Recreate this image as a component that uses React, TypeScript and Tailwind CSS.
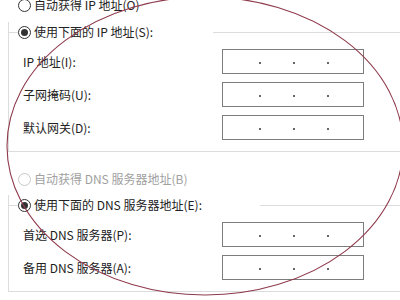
import React from "react";

function Radio({ checked = false, disabled = false }: { checked?: boolean; disabled?: boolean }) {
  return (
    <span
      className={`flex h-[13px] w-[13px] shrink-0 items-center justify-center rounded-full border bg-white ${
        disabled ? "border-[#c8c8c8]" : "border-[#333]"
      }`}
    >
      {checked && <span className="h-[7px] w-[7px] rounded-full bg-[#333]" />}
    </span>
  );
}

function IpBox() {
  return (
    <div className="flex h-[25px] w-[142px] shrink-0 items-center gap-[32px] border border-[#7d7d7d] bg-white pl-[36px] pt-[3px]">
      <span className="h-[2px] w-[2px] rounded-full bg-[#333]" />
      <span className="h-[2px] w-[2px] rounded-full bg-[#333]" />
      <span className="h-[2px] w-[2px] rounded-full bg-[#333]" />
    </div>
  );
}

function Field({ label }: { label: string }) {
  return (
    <div className="flex h-[25px] items-center">
      <span className="w-[213px] shrink-0 pl-[14px]">{label}</span>
      <IpBox />
    </div>
  );
}

function Group({ legend, legendWidth, fields }: { legend: string; legendWidth: string; fields: string[] }) {
  return (
    <div className="ml-[8px] w-[420px] border-b border-l border-[#dcdcdc]">
      <div className="-ml-px -mt-[10px] flex h-[20px] items-center">
        <span className="h-px w-[10px] bg-[#dcdcdc]" />
        <div className={`flex items-center gap-[3px] ${legendWidth}`}>
          <Radio checked />
          <span>{legend}</span>
        </div>
        <span className="h-px flex-1 bg-[#dcdcdc]" />
      </div>
      <div className="flex flex-col gap-[8px] pb-[11px] pt-[7px]">
        {fields.map((f) => (
          <Field key={f} label={f} />
        ))}
      </div>
    </div>
  );
}

export default function App() {
  return (
    <div className="relative h-[300px] w-[400px] overflow-hidden bg-white font-['Noto_Sans_CJK_SC',sans-serif] text-[12px] text-[#222]">
      <div className="-mt-[5px] flex h-[20px] items-center gap-[3px] pl-[18px]">
        <Radio />
        <span>自动获得 IP 地址(O)</span>
      </div>

      <div className="mt-[17px]">
        <Group legend="使用下面的 IP 地址(S):" legendWidth="w-[195px]" fields={["IP 地址(I):", "子网掩码(U):", "默认网关(D):"]} />
      </div>

      <div className="mt-[17px] flex h-[20px] items-center gap-[3px] pl-[18px] text-[#a0a0a0]">
        <Radio disabled />
        <span>自动获得 DNS 服务器地址(B)</span>
      </div>

      <div className="mt-[16px]">
        <Group legend="使用下面的 DNS 服务器地址(E):" legendWidth="w-[242px]" fields={["首选 DNS 服务器(P):", "备用 DNS 服务器(A):"]} />
      </div>

      <svg className="pointer-events-none absolute inset-0" width="400" height="300" viewBox="0 0 400 300">
        <ellipse cx="205" cy="146" rx="198" ry="149" fill="none" stroke="#8e3a4b" strokeWidth="1.1" />
      </svg>
    </div>
  );
}
